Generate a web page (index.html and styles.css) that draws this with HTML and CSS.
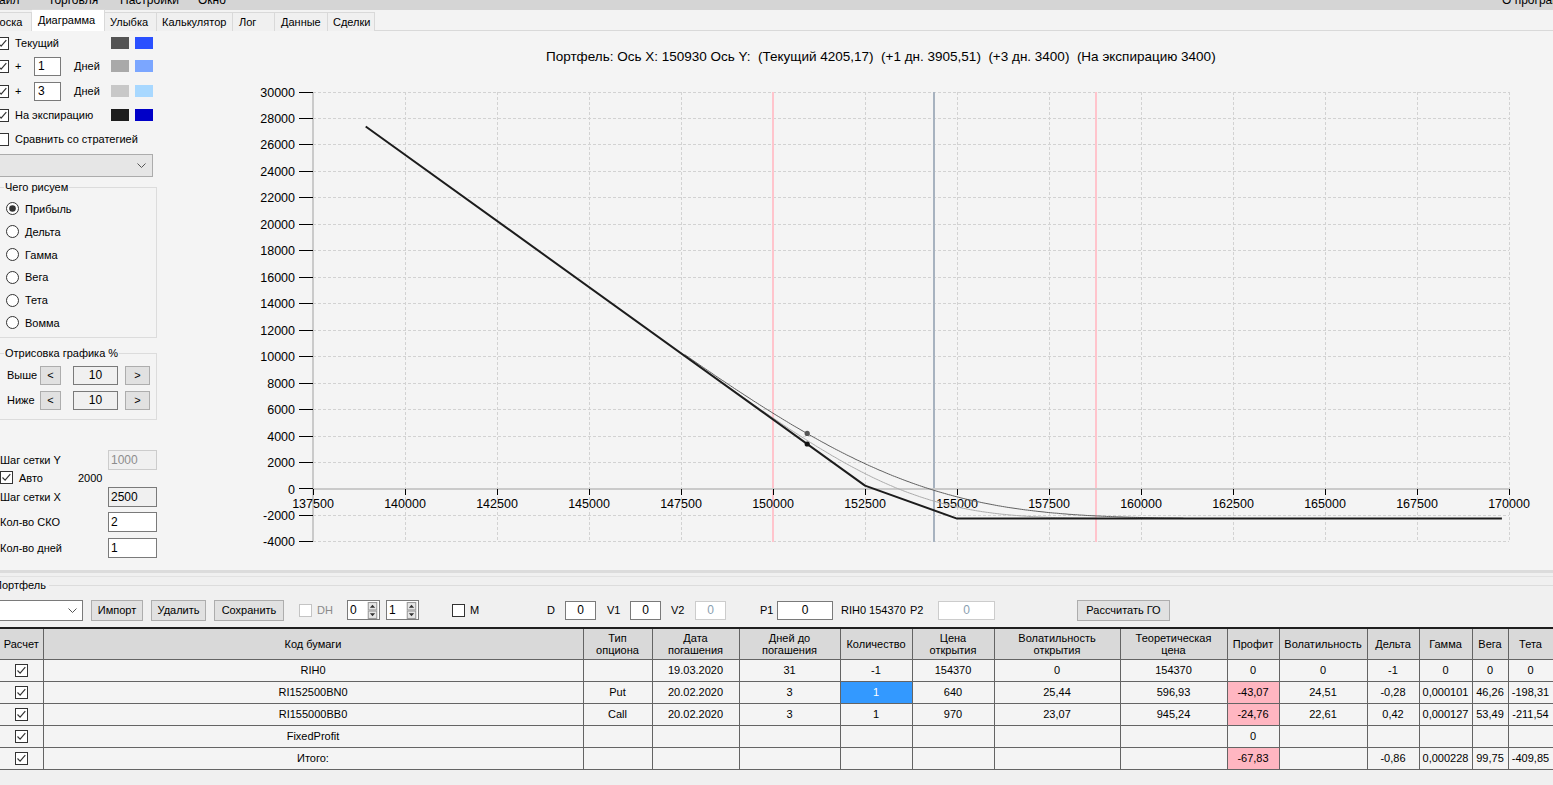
FILE: index.html
```html
<!DOCTYPE html>
<html lang="ru">
<head>
<meta charset="utf-8">
<title>Диаграмма</title>
<link rel="stylesheet" href="styles.css">
</head>
<body>
<div class="menubar">
  <div class="menu">
    <span class="mi mi-file">Файл</span>
    <span class="mi mi-trade">Торговля</span>
    <span class="mi mi-set">Настройки</span>
    <span class="mi mi-win">Окно</span>
    <span class="mi-spacer"></span>
    <span class="mi mi-about">О программе</span>
  </div>
</div>
<div class="tabstrip">
  <div class="tab t-doska">Доска</div>
  <div class="tab tab-sel t-diag">Диаграмма</div>
  <div class="tab t-smile">Улыбка</div>
  <div class="tab t-calc">Калькулятор</div>
  <div class="tab t-log">Лог</div>
  <div class="tab t-data">Данные</div>
  <div class="tab t-deals">Сделки</div>
</div>

<div class="page">
  <div class="left">
    <div class="lrow r1">
      <svg class="ck cut" viewBox="0 0 13 13"><rect x="0.5" y="0.5" width="12" height="12" class="ck-box"/><path d="M2.5 6.5l2.6 2.6 5.2-6" class="ck-mark"/></svg>
      <span class="lbl">Текущий</span>
      <span class="swatches"><span class="sw sw-a1"></span><span class="sw sw-b1"></span></span>
    </div>
    <div class="lrow r2">
      <svg class="ck cut" viewBox="0 0 13 13"><rect x="0.5" y="0.5" width="12" height="12" class="ck-box"/><path d="M2.5 6.5l2.6 2.6 5.2-6" class="ck-mark"/></svg>
      <span class="lbl plus">+</span>
      <span class="tbox days">1</span>
      <span class="dn">Дней</span>
      <span class="swatches"><span class="sw sw-a2"></span><span class="sw sw-b2"></span></span>
    </div>
    <div class="lrow r3">
      <svg class="ck cut" viewBox="0 0 13 13"><rect x="0.5" y="0.5" width="12" height="12" class="ck-box"/><path d="M2.5 6.5l2.6 2.6 5.2-6" class="ck-mark"/></svg>
      <span class="lbl plus">+</span>
      <span class="tbox days">3</span>
      <span class="dn">Дней</span>
      <span class="swatches"><span class="sw sw-a3"></span><span class="sw sw-b3"></span></span>
    </div>
    <div class="lrow r4">
      <svg class="ck cut" viewBox="0 0 13 13"><rect x="0.5" y="0.5" width="12" height="12" class="ck-box"/><path d="M2.5 6.5l2.6 2.6 5.2-6" class="ck-mark"/></svg>
      <span class="lbl">На экспирацию</span>
      <span class="swatches"><span class="sw sw-a4"></span><span class="sw sw-b4"></span></span>
    </div>
    <div class="lrow r5">
      <svg class="ck cut" viewBox="0 0 13 13"><rect x="0.5" y="0.5" width="12" height="12" class="ck-box"/></svg>
      <span class="lbl">Сравнить со стратегией</span>
    </div>
    <div class="combo-strat">
      <svg class="chev" viewBox="0 0 9 5"><path d="M0.5 0.5l4 4 4-4"/></svg>
    </div>

    <fieldset class="grp grp-what">
      <legend>Чего рисуем</legend>
      <div class="radios">
        <div class="rrow"><svg class="rd" viewBox="0 0 13 13"><circle cx="6.5" cy="6.5" r="6" class="rd-ring"/><circle cx="6.5" cy="6.5" r="3.3" class="rd-dot"/></svg><span>Прибыль</span></div>
        <div class="rrow"><svg class="rd" viewBox="0 0 13 13"><circle cx="6.5" cy="6.5" r="6" class="rd-ring"/></svg><span>Дельта</span></div>
        <div class="rrow"><svg class="rd" viewBox="0 0 13 13"><circle cx="6.5" cy="6.5" r="6" class="rd-ring"/></svg><span>Гамма</span></div>
        <div class="rrow"><svg class="rd" viewBox="0 0 13 13"><circle cx="6.5" cy="6.5" r="6" class="rd-ring"/></svg><span>Вега</span></div>
        <div class="rrow"><svg class="rd" viewBox="0 0 13 13"><circle cx="6.5" cy="6.5" r="6" class="rd-ring"/></svg><span>Тета</span></div>
        <div class="rrow"><svg class="rd" viewBox="0 0 13 13"><circle cx="6.5" cy="6.5" r="6" class="rd-ring"/></svg><span>Вомма</span></div>
      </div>
    </fieldset>

    <fieldset class="grp grp-draw">
      <legend>Отрисовка графика %</legend>
      <div class="drow drow1">
        <span class="dlbl">Выше</span>
        <span class="btn-s btn-lt">&lt;</span>
        <span class="tbox-c">10</span>
        <span class="btn-s btn-gt">&gt;</span>
      </div>
      <div class="drow drow2">
        <span class="dlbl">Ниже</span>
        <span class="btn-s btn-lt">&lt;</span>
        <span class="tbox-c">10</span>
        <span class="btn-s btn-gt">&gt;</span>
      </div>
    </fieldset>

    <div class="frow f1"><span class="flbl">Шаг сетки Y</span><span class="fbox fbox-dis">1000</span></div>
    <div class="frow-auto">
      <svg class="ck" viewBox="0 0 13 13"><rect x="0.5" y="0.5" width="12" height="12" class="ck-box"/><path d="M2.5 6.5l2.6 2.6 5.2-6" class="ck-mark"/></svg>
      <span class="auto-lbl">Авто</span><span>2000</span>
    </div>
    <div class="frow f2"><span class="flbl">Шаг сетки X</span><span class="fbox fbox-ro">2500</span></div>
    <div class="frow f3"><span class="flbl">Кол-во СКО</span><span class="fbox">2</span></div>
    <div class="frow f4"><span class="flbl">Кол-во дней</span><span class="fbox">1</span></div>
  </div>

  <svg class="chart" viewBox="160 31 1393 539">
    <text class="ttl" x="546" y="60.5">Портфель: Ось X: 150930 Ось Y:  (Текущий 4205,17)  (+1 дн. 3905,51)  (+3 дн. 3400)  (На экспирацию 3400)</text>
    <g class="grid">
      <path d="M405.5 92V542M497.5 92V542M589.5 92V542M681.5 92V542M773.5 92V542M865.5 92V542M957.5 92V542M1049.5 92V542M1141.5 92V542M1233.5 92V542M1325.5 92V542M1417.5 92V542M1509.5 92V542"/>
      <path d="M313 92.5H1509M313 118.5H1509M313 144.5H1509M313 171.5H1509M313 197.5H1509M313 224.5H1509M313 250.5H1509M313 277.5H1509M313 303.5H1509M313 330.5H1509M313 356.5H1509M313 383.5H1509M313 409.5H1509M313 436.5H1509M313 462.5H1509M313 515.5H1509M313 541.5H1509"/>
    </g>
    <line class="pink" x1="773" y1="92" x2="773" y2="542"/>
    <line class="pink" x1="1096" y1="92" x2="1096" y2="542"/>
    <line class="spot" x1="934" y1="92" x2="934" y2="542"/>
    <line class="axis" x1="313" y1="92" x2="313" y2="542"/>
    <line class="axis" x1="313" y1="489" x2="1509" y2="489"/>
    <g class="ticks">
      <path d="M299 92.5H313M299 118.5H313M299 144.5H313M299 171.5H313M299 197.5H313M299 224.5H313M299 250.5H313M299 277.5H313M299 303.5H313M299 330.5H313M299 356.5H313M299 383.5H313M299 409.5H313M299 436.5H313M299 462.5H313M299 488.5H313M299 515.5H313M299 541.5H313"/>
      <path d="M313.5 489V495M405.5 489V495M497.5 489V495M589.5 489V495M681.5 489V495M773.5 489V495M865.5 489V495M957.5 489V495M1049.5 489V495M1141.5 489V495M1233.5 489V495M1325.5 489V495M1417.5 489V495M1509.5 489V495"/>
    </g>
    <g class="ylab">
      <text x="295" y="96.5">30000</text>
      <text x="295" y="123">28000</text>
      <text x="295" y="149.4">26000</text>
      <text x="295" y="175.9">24000</text>
      <text x="295" y="202.4">22000</text>
      <text x="295" y="228.8">20000</text>
      <text x="295" y="255.3">18000</text>
      <text x="295" y="281.8">16000</text>
      <text x="295" y="308.2">14000</text>
      <text x="295" y="334.7">12000</text>
      <text x="295" y="361.2">10000</text>
      <text x="295" y="387.6">8000</text>
      <text x="295" y="414.1">6000</text>
      <text x="295" y="440.6">4000</text>
      <text x="295" y="467">2000</text>
      <text x="295" y="493.5">0</text>
      <text x="295" y="520">-2000</text>
      <text x="295" y="546.4">-4000</text>
    </g>
    <g class="xlab">
      <text x="313" y="507.5">137500</text>
      <text x="405" y="507.5">140000</text>
      <text x="497" y="507.5">142500</text>
      <text x="589" y="507.5">145000</text>
      <text x="681" y="507.5">147500</text>
      <text x="773" y="507.5">150000</text>
      <text x="865" y="507.5">152500</text>
      <text x="957" y="507.5">155000</text>
      <text x="1049" y="507.5">157500</text>
      <text x="1141" y="507.5">160000</text>
      <text x="1233" y="507.5">162500</text>
      <text x="1325" y="507.5">165000</text>
      <text x="1417" y="507.5">167500</text>
      <text x="1509" y="507.5">170000</text>
    </g>
    <path id="curve-d1" class="c-d1" d=""/>
    <path id="curve-now" class="c-now" d=""/>
    <path class="c-exp" d="M365.7 126.5L865 485.6L957 518.6L1501.9 518.6"/>
    <circle class="dot-now" cx="807.2" cy="433.4" r="2.6"/>
    <circle class="dot-exp" cx="807.2" cy="444" r="2.6"/>
  </svg>
</div>

<div class="splitter"></div>

<div class="bottom">
  <div class="pf-legend"><span class="pf-title">Портфель</span><span class="pf-line"></span></div>
  <div class="toolbar">
    <span class="pf-combo"><svg class="chev" viewBox="0 0 9 5"><path d="M0.5 0.5l4 4 4-4"/></svg></span>
    <span class="btn b-imp">Импорт</span>
    <span class="btn b-del">Удалить</span>
    <span class="btn b-save">Сохранить</span>
    <svg class="ck ck-dis dh-ck" viewBox="0 0 13 13"><rect x="0.5" y="0.5" width="12" height="12" class="ck-box"/></svg>
    <span class="tl tl-dh dis">DH</span>
    <span class="num n1"><span class="num-v">0</span><span class="spin"><svg viewBox="0 0 9 16"><rect x="0.5" y="0.5" width="8" height="7" class="sp-b"/><rect x="0.5" y="8.5" width="8" height="7" class="sp-b"/><path d="M2 5.5h5l-2.5-3z M2 10.5h5l-2.5 3z" class="sp-a"/></svg></span></span>
    <span class="num n2"><span class="num-v">1</span><span class="spin"><svg viewBox="0 0 9 16"><rect x="0.5" y="0.5" width="8" height="7" class="sp-b"/><rect x="0.5" y="8.5" width="8" height="7" class="sp-b"/><path d="M2 5.5h5l-2.5-3z M2 10.5h5l-2.5 3z" class="sp-a"/></svg></span></span>
    <svg class="ck m-ck" viewBox="0 0 13 13"><rect x="0.5" y="0.5" width="12" height="12" class="ck-box"/></svg>
    <span class="tl tl-m">M</span>
    <span class="tl tl-d">D</span>
    <span class="ibox ib-d">0</span>
    <span class="tl tl-v1">V1</span>
    <span class="ibox ib-v1">0</span>
    <span class="tl tl-v2">V2</span>
    <span class="ibox ib-v2 ibox-dis">0</span>
    <span class="tl tl-p1">P1</span>
    <span class="ibox ib-p1">0</span>
    <span class="tl tl-rih">RIH0 154370</span>
    <span class="tl tl-p2">P2</span>
    <span class="ibox ib-p2 ibox-dis">0</span>
    <span class="btn b-go">Рассчитать ГО</span>
  </div>
  <div class="tblwrap">
    <table class="grid-tbl">
      <colgroup>
        <col class="w43"><col class="w540"><col class="w69"><col class="w87"><col class="w101"><col class="w72"><col class="w82"><col class="w126"><col class="w107"><col class="w52"><col class="w88"><col class="w52b"><col class="w53"><col class="w36"><col class="w45">
      </colgroup>
      <thead>
        <tr><th>Расчет</th><th>Код бумаги</th><th>Тип<br>опциона</th><th>Дата<br>погашения</th><th>Дней до<br>погашения</th><th>Количество</th><th>Цена<br>открытия</th><th>Волатильность<br>открытия</th><th>Теоретическая<br>цена</th><th>Профит</th><th>Волатильность</th><th>Дельта</th><th>Гамма</th><th>Вега</th><th>Тета</th></tr>
      </thead>
      <tbody>
        <tr><td><svg class="ck tck" viewBox="0 0 13 13"><rect x="0.5" y="0.5" width="12" height="12" class="ck-box"/><path d="M2.5 6.5l2.6 2.6 5.2-6" class="ck-mark"/></svg></td><td>RIH0</td><td></td><td>19.03.2020</td><td>31</td><td>-1</td><td>154370</td><td>0</td><td>154370</td><td>0</td><td>0</td><td>-1</td><td>0</td><td>0</td><td>0</td></tr>
        <tr><td><svg class="ck tck" viewBox="0 0 13 13"><rect x="0.5" y="0.5" width="12" height="12" class="ck-box"/><path d="M2.5 6.5l2.6 2.6 5.2-6" class="ck-mark"/></svg></td><td>RI152500BN0</td><td>Put</td><td>20.02.2020</td><td>3</td><td class="sel">1</td><td>640</td><td>25,44</td><td>596,93</td><td class="neg">-43,07</td><td>24,51</td><td>-0,28</td><td>0,000101</td><td>46,26</td><td>-198,31</td></tr>
        <tr><td><svg class="ck tck" viewBox="0 0 13 13"><rect x="0.5" y="0.5" width="12" height="12" class="ck-box"/><path d="M2.5 6.5l2.6 2.6 5.2-6" class="ck-mark"/></svg></td><td>RI155000BB0</td><td>Call</td><td>20.02.2020</td><td>3</td><td>1</td><td>970</td><td>23,07</td><td>945,24</td><td class="neg">-24,76</td><td>22,61</td><td>0,42</td><td>0,000127</td><td>53,49</td><td>-211,54</td></tr>
        <tr><td><svg class="ck tck" viewBox="0 0 13 13"><rect x="0.5" y="0.5" width="12" height="12" class="ck-box"/><path d="M2.5 6.5l2.6 2.6 5.2-6" class="ck-mark"/></svg></td><td>FixedProfit</td><td></td><td></td><td></td><td></td><td></td><td></td><td></td><td>0</td><td></td><td></td><td></td><td></td><td></td></tr>
        <tr><td><svg class="ck tck" viewBox="0 0 13 13"><rect x="0.5" y="0.5" width="12" height="12" class="ck-box"/><path d="M2.5 6.5l2.6 2.6 5.2-6" class="ck-mark"/></svg></td><td>Итого:</td><td></td><td></td><td></td><td></td><td></td><td></td><td></td><td class="neg">-67,83</td><td></td><td>-0,86</td><td>0,000228</td><td>99,75</td><td>-409,85</td></tr>
      </tbody>
    </table>
  </div>
</div>
<script src="script.js"></script>
</body>
</html>
```
FILE: styles.css
```css
* { box-sizing: border-box; }
html, body { margin: 0; padding: 0; }
body {
  width: 1553px; height: 785px; overflow: hidden;
  background: #f0f0f0; color: #000;
  font-family: "Liberation Sans", Arial, sans-serif; font-size: 11px;
}

/* menu */
.menubar { height: 10px; background: #d5d5d5; overflow: hidden; }
.menu { display: flex; margin-top: -9px; line-height: 18px; font-size: 12px; white-space: nowrap; }
.mi-file { margin-left: -10px; width: 58px; }
.mi-trade { width: 72px; }
.mi-set { width: 78px; }
.mi-win { width: 40px; }
.mi-spacer { flex: 1; }
.mi-about { width: 51px; overflow: visible; }

/* tabs */
.tabstrip { height: 21px; background: #f3f3f3; display: flex; align-items: flex-end; border-bottom: 1px solid #d9d9d9; }
.tab { flex: none; height: 19px; margin-bottom: -1px; background: #f0f0f0; border: 1px solid #d9d9d9; border-bottom: none; padding: 2px 0 0 5px; line-height: 14px; white-space: nowrap; overflow: hidden; }
.tab + .tab { border-left: none; }
.tab-sel { height: 22px; background: #fff; padding-top: 3px; border-left: 1px solid #d9d9d9; }
.tab-sel + .tab { border-left: none; }
.t-doska { margin-left: -14px; width: 46px; }
.t-diag { width: 73px; padding-left: 6px; }
.t-smile { width: 52px; }
.t-calc { width: 76px; }
.t-log { width: 42px; padding-left: 6px; }
.t-data { width: 53px; padding-left: 6px; }
.t-deals { width: 47px; }

/* page */
.page { display: flex; height: 539px; background: #f4f4f4; }
.left { width: 160px; flex: none; display: flex; flex-direction: column; }
.lrow { display: flex; align-items: center; height: 20px; flex: none; }
.r1 { margin-top: 2px; }
.r2 { margin-top: 3px; }
.r3 { margin-top: 5px; }
.r4 { margin-top: 4px; }
.r5 { margin-top: 4px; }
.ck { width: 13px; height: 13px; flex: none; display: block; }
.ck.cut { margin-left: -4px; }
.ck-box { fill: #fff; stroke: #333; }
.ck-mark { fill: none; stroke: #333; stroke-width: 1.2; }
.ck-dis .ck-box { stroke: #c4c4c4; }
.lbl { margin-left: 6px; white-space: nowrap; }
.plus { width: 19px; }
.tbox { display: block; width: 27px; height: 19px; border: 1px solid #7a7a7a; background: #fff; font-size: 12px; line-height: 17px; padding-left: 3px; }
.dn { margin-left: 13px; }
.swatches { margin-left: auto; margin-right: 7px; display: flex; gap: 6px; }
.sw { display: block; width: 18px; height: 12px; }
.sw-a1 { background: #545454; } .sw-b1 { background: #2a50ff; }
.sw-a2 { background: #a9a9a9; } .sw-b2 { background: #7ba6ff; }
.sw-a3 { background: #c8c8c8; } .sw-b3 { background: #a8d8ff; }
.sw-a4 { background: #1e1e1e; } .sw-b4 { background: #0000c8; }

.combo-strat { margin-top: 5px; height: 23px; width: 153px; background: #e6e6e6; border: 1px solid #acacac; border-left: none; display: flex; align-items: center; justify-content: flex-end; padding-right: 6px; flex: none; }
.chev { width: 9px; height: 5px; display: block; }
.chev path { fill: none; stroke: #555; stroke-width: 1; }

.grp { margin: 0 0 0 -1px; padding: 0; width: 158px; border: 1px solid #dcdcdc; flex: none; min-width: 0; }
.grp legend { margin-left: 4px; padding: 0 1px; line-height: 12px; font-size: 11px; }
.grp-what { margin-top: 4px; height: 157px; }
.radios { padding-top: 4.6px; }
.rrow { display: flex; align-items: center; height: 22.8px; }
.rd { width: 13px; height: 13px; margin-left: 6px; flex: none; display: block; }
.rd + span { margin-left: 6px; }
.rd-ring { fill: #fff; stroke: #333; }
.rd-dot { fill: #333; }
.grp-draw { margin-top: 9px; height: 73px; }
.drow { display: flex; align-items: center; height: 20px; }
.drow1 { margin-top: 6px; }
.drow2 { margin-top: 5px; }
.dlbl { width: 40px; padding-left: 7px; }
.btn-s { display: flex; align-items: center; justify-content: center; height: 19px; background: #e1e1e1; border: 1px solid #adadad; font-size: 11px; }
.btn-lt { width: 21px; }
.btn-gt { width: 25px; margin-left: 7px; }
.tbox-c { display: flex; align-items: center; justify-content: center; width: 45px; height: 19px; margin-left: 12px; border: 1px solid #7a7a7a; background: #f0f0f0; font-size: 12px; }

.frow { display: flex; align-items: center; height: 20px; flex: none; }
.f1 { margin-top: 30px; }
.f2 { margin-top: 3px; }
.f3 { margin-top: 5px; }
.f4 { margin-top: 6px; }
.flbl { width: 108px; white-space: nowrap; }
.fbox { display: block; width: 49px; height: 20px; border: 1px solid #7a7a7a; background: #fff; font-size: 12px; line-height: 18px; padding-left: 2px; }
.fbox-dis { border-color: #cccccc; background: #f0f0f0; color: #8d8d8d; }
.fbox-ro { background: #f0f0f0; }
.frow-auto { display: flex; align-items: center; height: 13px; margin-top: 1px; flex: none; }
.auto-lbl { margin-left: 6px; width: 59px; }

/* chart */
.chart { flex: none; width: 1393px; height: 539px; display: block; font-family: "Liberation Sans", Arial, sans-serif; }
.ttl { font-size: 13.5px; white-space: pre; fill: #000; }
.grid path { fill: none; stroke: #d2d2d2; stroke-width: 1; stroke-dasharray: 3 2; }
.pink { stroke: #ffc4cc; stroke-width: 2; }
.spot { stroke: #a7b2bf; stroke-width: 2; }
.axis { stroke: #cacaca; stroke-width: 2; }
.ticks path { stroke: #000; stroke-width: 1; fill: none; }
.ylab text { font-size: 12.5px; text-anchor: end; fill: #000; }
.xlab text { font-size: 12.5px; text-anchor: middle; fill: #000; }
.c-exp { fill: none; stroke: #1c1c1c; stroke-width: 2; stroke-linejoin: round; }
.c-now { fill: none; stroke: #606060; stroke-width: 1; }
.c-d1 { fill: none; stroke: #ababab; stroke-width: 1; }
.dot-now { fill: #555; }
.dot-exp { fill: #111; }

/* splitter */
.splitter { height: 7px; background: #f0f0f0; border-top: 3px solid #dcdcdc; border-bottom: 1px solid #e2e2e2; }

/* bottom */
.bottom { height: 208px; background: #f0f0f0; }
.pf-legend { display: flex; align-items: center; height: 12px; margin-top: 2px; }
.pf-title { margin-left: -6px; padding-right: 3px; line-height: 12px; }
.pf-line { flex: 1; border-top: 1px solid #dcdcdc; margin-top: 1px; }
.toolbar { display: flex; align-items: center; height: 22px; margin-top: 8px; white-space: nowrap; }
.pf-combo { display: flex; align-items: center; justify-content: flex-end; width: 83px; height: 21px; background: #fff; border: 1px solid #7a7a7a; border-left: none; padding-right: 5px; }
.btn { display: flex; align-items: center; justify-content: center; height: 21px; background: #e1e1e1; border: 1px solid #adadad; }
.b-imp { width: 52px; margin-left: 8px; }
.b-del { width: 55px; margin-left: 8px; }
.b-save { width: 70px; margin-left: 8px; }
.dh-ck { margin-left: 15px; }
.tl { display: block; }
.dis { color: #8a8a8a; }
.tl-dh { width: 17px; margin-left: 5px; }
.num { display: flex; align-items: center; height: 20px; width: 33px; border: 1px solid #7a7a7a; background: #fff; padding-left: 2px; font-size: 12px; }
.num-v { flex: 1; }
.spin { width: 13px; height: 18px; display: flex; align-items: center; justify-content: center; }
.spin svg { width: 11px; height: 17px; display: block; }
.sp-b { fill: #e6e6e6; stroke: #9a9a9a; }
.sp-a { fill: #333; }
.n1 { margin-left: 13px; }
.n2 { margin-left: 6px; }
.m-ck { margin-left: 33px; }
.tl-m { width: 9px; margin-left: 5px; }
.tl-d { width: 8px; margin-left: 68px; }
.ibox { display: flex; align-items: center; justify-content: center; height: 19px; border: 1px solid #7a7a7a; background: #fff; font-size: 12px; }
.ibox-dis { border-color: #cccccc; color: #8aa0b0; }
.ib-d { width: 31px; margin-left: 10px; }
.tl-v1 { width: 13px; margin-left: 11px; }
.ib-v1 { width: 31px; margin-left: 10px; }
.tl-v2 { width: 13px; margin-left: 10px; }
.ib-v2 { width: 31px; margin-left: 11px; }
.tl-p1 { width: 14px; margin-left: 34px; }
.ib-p1 { width: 56px; margin-left: 3px; }
.tl-rih { width: 64px; margin-left: 8px; }
.tl-p2 { width: 14px; margin-left: 5px; }
.ib-p2 { width: 57px; margin-left: 14px; }
.b-go { width: 93px; margin-left: 82px; }

.tblwrap { margin-top: 6px; border-top: 2px solid #1e1e1e; }
.grid-tbl { width: 1553px; table-layout: fixed; border-collapse: collapse; font-size: 11px; }
.grid-tbl th, .grid-tbl td { border: 1px solid #646464; text-align: center; padding: 0; overflow: hidden; white-space: nowrap; }
.grid-tbl th { background: #d9d9d9; font-weight: normal; height: 30px; line-height: 12px; border-top: none; }
.grid-tbl td { background: #f4f4f4; height: 22px; }
.grid-tbl th:first-child, .grid-tbl td:first-child { border-left: none; }
.grid-tbl td.sel { background: #3399ff; color: #fff; }
.grid-tbl td.neg { background: #ffb6c1; }
.tck { margin: 0 auto; }
.w43 { width: 43px; } .w540 { width: 540px; } .w69 { width: 69px; } .w87 { width: 87px; }
.w101 { width: 101px; } .w72 { width: 72px; } .w82 { width: 82px; } .w126 { width: 126px; }
.w107 { width: 107px; } .w52 { width: 52px; } .w88 { width: 88px; } .w52b { width: 52px; }
.w53 { width: 53px; } .w36 { width: 36px; } .w45 { width: 45px; }
```
FILE: script.js
```js
(function () {
  function N(x) {
    var t = 1 / (1 + 0.2316419 * Math.abs(x));
    var d = 0.3989423 * Math.exp(-x * x / 2);
    var p = d * t * (0.3193815 + t * (-0.3565638 + t * (1.781478 + t * (-1.821256 + t * 1.330274))));
    return x > 0 ? 1 - p : p;
  }
  function opt(F, K, v, T, call) {
    var s = v * Math.sqrt(T);
    var d1 = (Math.log(F / K) + 0.5 * s * s) / s;
    var d2 = d1 - s;
    return call ? F * N(d1) - K * N(d2) : K * N(-d2) - F * N(-d1);
  }
  function pnl(S, T) {
    return -(S - 154370) + opt(S, 152500, 0.2451, T, false) - 640 + opt(S, 155000, 0.2261, T, true) - 970;
  }
  function px(s) { return 313 + (s - 137500) * 0.0368; }
  function py(p) { return 489 - p * 0.0132335; }
  function build(T, a, b) {
    var d = '', n = 240;
    for (var i = 0; i <= n; i++) {
      var s = a + (b - a) * i / n;
      d += (i ? 'L' : 'M') + px(s).toFixed(1) + ' ' + py(pnl(s, T)).toFixed(1);
    }
    return d;
  }
  var d1 = document.getElementById('curve-d1');
  var now = document.getElementById('curve-now');
  if (d1) d1.setAttribute('d', build(1.1 / 365, 148800, 159900));
  if (now) now.setAttribute('d', build(2.79 / 365, 147600, 161150));
})();
```
